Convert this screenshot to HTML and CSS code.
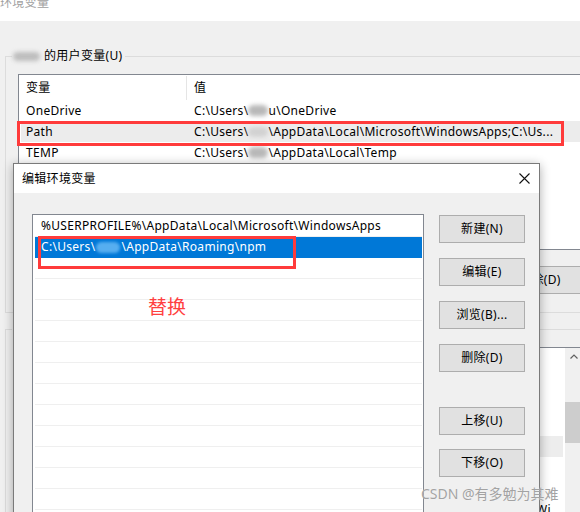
FILE: index.html
```html
<!DOCTYPE html>
<html lang="zh-CN">
<head>
<meta charset="utf-8">
<title>编辑环境变量</title>
<link rel="stylesheet" href="styles.css">
</head>
<body>
<div class="bg-window">
  <div class="bg-title"><span>环境变量</span></div>
  <div class="bg-body">
    <fieldset class="group group-user">
      <legend><span class="blob blob-legend"></span>的用户变量(U)</legend>
      <div class="listview lv-user">
        <div class="lv-row lv-head"><span class="c1">变量</span><span class="c2">值</span></div>
        <div class="lv-row"><span class="c1">OneDrive</span><span class="c2">C:\Users\<span class="blob blob-gray"></span>u\OneDrive</span></div>
        <div class="lv-row is-current"><span class="c1">Path</span><span class="c2">C:\Users\<span class="blob blob-light"></span>\AppData\Local\Microsoft\WindowsApps;C:\Us...</span></div>
        <div class="lv-row"><span class="c1">TEMP</span><span class="c2">C:\Users\<span class="blob blob-gray"></span>\AppData\Local\Temp</span></div>
        <div class="lv-row"><span class="c1">TMP</span><span class="c2">C:\Users\<span class="blob blob-gray"></span>\AppData\Local\Temp</span></div>
      </div>
      <div class="btn-row">
        <button class="btn btn-bg">新建(N)...</button>
        <button class="btn btn-bg">编辑(E)...</button>
        <button class="btn btn-bg">删除(D)</button>
      </div>
    </fieldset>
    <fieldset class="group group-sys">
      <legend>系统变量(S)</legend>
      <div class="listview lv-sys">
        <div class="lv-content">
          <div class="lv-row lv-head"><span class="c1">变量</span><span class="c2">值</span></div>
          <div class="lv-row"><span class="c1">ComSpec</span><span class="c2">C:\Windows\system32\cmd.exe</span></div>
          <div class="lv-row"><span class="c1">DriverData</span><span class="c2">C:\Windows\System32\Drivers\DriverData</span></div>
          <div class="lv-row"><span class="c1">NUMBER_OF_PROCESSORS</span><span class="c2">8</span></div>
          <div class="lv-row is-hover"><span class="c1">OS</span><span class="c2">Windows_NT</span></div>
          <div class="lv-row"><span class="c1">Path</span><span class="c2">C:\Windows\system32;C:\Windows;C:\Windows\Sys</span></div>
          <div class="lv-row"><span class="c1">PATHEXT</span><span class="c2">.COM;.EXE;.BAT;.CMD;.VBS;.VBE;.JS;.JSE;.WSF</span></div>
          <div class="lv-row"><span class="c1">PSModulePath</span><span class="c2">%ProgramFiles%\WindowsPowerShell\Modules;C:\Python;Wi</span></div>
        </div>
        <div class="scrollbar">
          <div class="sb-arrow">
            <svg width="8" height="5" viewBox="0 0 8 5"><path d="M0.5 4.5 L4 1 L7.5 4.5" fill="none" stroke="#606060" stroke-width="1.2"/></svg>
          </div>
          <div class="sb-thumb"></div>
        </div>
      </div>
    </fieldset>
  </div>
</div>

<div class="dialog">
  <div class="dlg-title">
    <span>编辑环境变量</span>
    <svg class="dlg-close" width="11" height="11" viewBox="0 0 11 11"><path d="M0.5 0.5 L10.5 10.5 M10.5 0.5 L0.5 10.5" stroke="#111" stroke-width="1.1" fill="none"/></svg>
  </div>
  <div class="dlg-body">
    <div class="path-list">
      <div class="pl-row">%USERPROFILE%\AppData\Local\Microsoft\WindowsApps</div>
      <div class="pl-row is-selected">C:\Users\<span class="blob blob-blue"></span>\AppData\Roaming\npm</div>
      <div class="pl-row"></div>
      <div class="pl-row"></div>
      <div class="pl-row"></div>
      <div class="pl-row"></div>
      <div class="pl-row"></div>
      <div class="pl-row"></div>
      <div class="pl-row"></div>
      <div class="pl-row"></div>
      <div class="pl-row"></div>
      <div class="pl-row"></div>
      <div class="pl-row"></div>
      <div class="pl-row"></div>
      <div class="pl-row"></div>
    </div>
    <div class="dlg-buttons">
      <div class="btn-group">
        <button class="btn">新建(N)</button>
        <button class="btn">编辑(E)</button>
        <button class="btn">浏览(B)...</button>
        <button class="btn">删除(D)</button>
      </div>
      <div class="btn-group btn-group-move">
        <button class="btn">上移(U)</button>
        <button class="btn">下移(O)</button>
      </div>
    </div>
  </div>
</div>

<div class="mark mark-path"></div>
<div class="mark mark-npm"></div>
<div class="note">替换</div>
<div class="watermark">CSDN @有多勉为其难</div>
</body>
</html>
```

FILE: styles.css
```css
* { box-sizing: border-box; }

html, body {
  margin: 0;
  padding: 0;
}

body {
  width: 580px;
  height: 512px;
  overflow: hidden;
  position: relative;
  background: #f0f0f0;
  color: #000;
  font-family: "Noto Sans", "Noto Sans CJK SC", sans-serif;
  font-size: 12px;
  line-height: 16px;
  letter-spacing: 0.3px;
}

/* ---------- background window ---------- */
.bg-window {
  width: 600px;
}

.bg-title {
  height: 21px;
  background: #fff;
  color: #a0a0a0;
  overflow: hidden;
}

.bg-title span {
  display: block;
  margin-top: -4px;
  line-height: 14px;
}

.bg-body {
  padding: 27px 0 0 5px;
}

.group {
  margin: 0;
  border: 1px solid #dcdcdc;
  padding: 10px 16px 18px 12px;
  min-width: 0;
}

.group legend {
  margin-left: -6px;
  padding: 0 3px 0 1px;
  line-height: 16px;
  display: flex;
  align-items: center;
}

.group-sys {
  margin-top: 8px;
  padding-bottom: 0;
}

.blob {
  display: inline-block;
  vertical-align: middle;
  border-radius: 6px;
}

.blob-legend {
  width: 27px;
  height: 9px;
  background: #bdbdbd;
  filter: blur(2px);
  margin-right: 4px;
}

.blob-gray {
  width: 20px;
  height: 11px;
  background: #b8b8b8;
  filter: blur(2px);
}

.blob-light {
  width: 20px;
  height: 10px;
  background: #d2d2d2;
  filter: blur(2px);
}

.blob-blue {
  width: 24px;
  height: 11px;
  background: #56aef0;
  filter: blur(1.5px);
  margin: 0 1px;
}

.listview {
  background: #fff;
  border: 1px solid #828790;
}

.lv-user {
  height: 176px;
  overflow: hidden;
}

.lv-row {
  display: flex;
  align-items: center;
  height: 21px;
  margin: 0 2px;
  white-space: nowrap;
}

.lv-head {
  height: 25px;
}

.lv-row .c1 {
  width: 166px;
  flex: none;
  padding-left: 5px;
  overflow: hidden;
}

.lv-row .c2 {
  padding-left: 7px;
  display: flex;
  align-items: center;
}

.lv-head .c1 {
  border-right: 1px solid #e5e5e5;
  height: 24px;
  display: flex;
  align-items: center;
}

.is-current {
  background: #ececec;
}

.is-hover {
  background: #ededed;
}

.btn-row {
  display: flex;
  justify-content: flex-end;
  gap: 10px;
  margin-top: 16px;
}

.btn {
  font: inherit;
  letter-spacing: inherit;
  color: #000;
  background: #e1e1e1;
  border: 1px solid #adadad;
  border-radius: 0;
  height: 28px;
  width: 86px;
  padding: 0;
  margin: 0;
  line-height: 16px;
}

.lv-sys {
  display: flex;
  height: 200px;
  overflow: hidden;
}

.lv-content {
  flex: 1;
  min-width: 0;
  overflow: hidden;
}

.scrollbar {
  width: 17px;
  flex: none;
  background: #f0f0f0;
}

.sb-arrow {
  height: 17px;
  display: flex;
  align-items: center;
  justify-content: center;
}

.sb-thumb {
  margin-top: 37px;
  height: 41px;
  background: #cdcdcd;
}

/* ---------- dialog ---------- */
.dialog {
  position: absolute;
  left: 13px;
  top: 163px;
  width: 527px;
  height: 380px;
  border: 1px solid #7a7a7a;
  background: #f0f0f0;
  box-shadow: 0 2px 10px rgba(0, 0, 0, 0.32);
}

.dlg-title {
  height: 29px;
  background: #fff;
  display: flex;
  align-items: center;
  justify-content: space-between;
  padding: 0 9px 0 8px;
}

.dlg-body {
  display: flex;
  gap: 15px;
  padding: 21px 14px 0 18px;
}

.path-list {
  width: 392px;
  height: 330px;
  background: #fff;
  border: 1px solid #828790;
  padding: 1px 1px 0 2px;
  overflow: hidden;
}

.pl-row {
  height: 21px;
  border-bottom: 1px solid #efefef;
  padding-left: 6px;
  display: flex;
  align-items: center;
  white-space: nowrap;
}

.pl-row.is-selected {
  background: #0078d7;
  border-bottom-color: #0078d7;
  color: #fff;
}

.dlg-buttons {
  width: 86px;
  padding-top: 1px;
}

.btn-group {
  display: flex;
  flex-direction: column;
  gap: 15px;
}

.btn-group-move {
  margin-top: 35px;
  gap: 14px;
}

/* ---------- annotations ---------- */
.mark {
  position: absolute;
  border: 3px solid #ff3b3b;
}

.mark-path {
  left: 17px;
  top: 121px;
  width: 547px;
  height: 25px;
}

.mark-npm {
  left: 38px;
  top: 236px;
  width: 258px;
  height: 33px;
}

.note {
  position: absolute;
  left: 148px;
  top: 296px;
  font-size: 19px;
  line-height: 20px;
  letter-spacing: 0;
  color: #ff4040;
  font-family: "Noto Sans CJK SC", sans-serif;
}

.watermark {
  position: absolute;
  left: 421px;
  top: 486px;
  font-size: 14px;
  line-height: 16px;
  letter-spacing: 0;
  color: #a3a3a3;
  font-family: "Noto Sans", "Noto Sans CJK SC", sans-serif;
  text-shadow: 0 0 1px rgba(255, 255, 255, 0.8);
}
```
